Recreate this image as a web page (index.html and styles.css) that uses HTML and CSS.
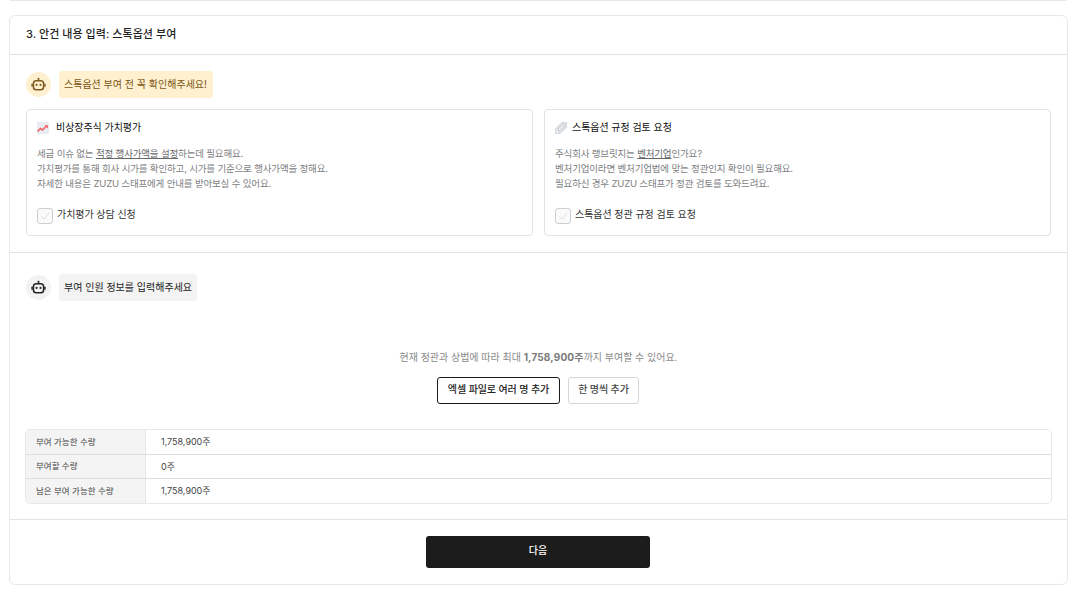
FILE: index.html
```html
<!DOCTYPE html>
<html lang="ko">
<head>
<meta charset="utf-8">
<title>스톡옵션 부여</title>
<link rel="stylesheet" href="styles.css">
</head>
<body>
<div class="top-rule"></div>
<main class="panel">
  <header class="panel-head">3. 안건 내용 입력: 스톡옵션 부여</header>
  <section class="notice">
    <div class="bot-row">
      <span class="avatar avatar-warm">
        <svg class="bot" viewBox="0 0 16 16"><use href="#bot"/></svg>
      </span>
      <span class="bubble bubble-warm">스톡옵션 부여 전 꼭 확인해주세요!</span>
    </div>
    <div class="cards">
      <article class="card">
        <h3 class="card-title">
          <svg class="icon-chart" viewBox="0 0 12 12"><rect width="12" height="12" rx="1" fill="#e8ebef"/><path d="M0.5 9.5 L3.5 6.5 L5.5 8 L9.5 4" fill="none" stroke="#f7626a" stroke-width="1.6"/><path d="M7.5 3.2 H11 V6.5 Z" fill="#f7626a"/></svg>
          비상장주식 가치평가
        </h3>
        <p class="card-text">세금 이슈 없는 <u>적정 행사가액을 설정</u>하는데 필요해요.<br>가치평가를 통해 회사 시가를 확인하고, 시가를 기준으로 행사가액을 정해요.<br>자세한 내용은 ZUZU 스태프에게 안내를 받아보실 수 있어요.</p>
        <label class="check">
          <span class="box"><svg viewBox="0 0 16 16"><path d="M4 8.5 L7 11.5 L12.5 4.5" fill="none" stroke="#d5d8dc" stroke-width="1"/></svg></span>
          <span class="check-text">가치평가 상담 신청</span>
        </label>
      </article>
      <article class="card card-alt">
        <h3 class="card-title">
          <svg class="icon-clip" viewBox="0 0 12 12"><g transform="rotate(45 6 6)" fill="#e9ecef" stroke="#bfc5cc" stroke-width="0.9"><rect x="2.8" y="-1.5" width="6.4" height="15" rx="3.2"/><rect x="4.6" y="0.6" width="2.8" height="9.5" rx="1.4"/></g></svg>
          스톡옵션 규정 검토 요청
        </h3>
        <p class="card-text">주식회사 랭브릿지는 <u>벤처기업</u>인가요?<br>벤처기업이라면 벤처기업법에 맞는 정관인지 확인이 필요해요.<br>필요하신 경우 ZUZU 스태프가 정관 검토를 도와드려요.</p>
        <label class="check">
          <span class="box"><svg viewBox="0 0 16 16"><path d="M4 8.5 L7 11.5 L12.5 4.5" fill="none" stroke="#d5d8dc" stroke-width="1"/></svg></span>
          <span class="check-text">스톡옵션 정관 규정 검토 요청</span>
        </label>
      </article>
    </div>
  </section>
  <section class="people">
    <div class="bot-row">
      <span class="avatar avatar-grey">
        <svg class="bot bot-dark" viewBox="0 0 16 16"><use href="#bot"/></svg>
      </span>
      <span class="bubble bubble-grey">부여 인원 정보를 입력해주세요</span>
    </div>
    <p class="limit">현재 정관과 상법에 따라 최대 <b>1,758,900주</b>까지 부여할 수 있어요.</p>
    <div class="actions">
      <button class="btn btn-strong">엑셀 파일로 여러 명 추가</button>
      <button class="btn btn-soft">한 명씩 추가</button>
    </div>
    <div class="summary">
      <div class="row"><div class="label">부여 가능한 수량</div><div class="value">1,758,900주</div></div>
      <div class="row"><div class="label">부여할 수량</div><div class="value">0주</div></div>
      <div class="row"><div class="label">남은 부여 가능한 수량</div><div class="value">1,758,900주</div></div>
    </div>
  </section>
  <footer class="panel-foot"><button class="next">다음</button></footer>
</main>
<svg class="defs" width="0" height="0">
  <symbol id="bot" viewBox="0 0 16 16">
    <circle cx="8" cy="1.8" r="1.1" fill="currentColor"/>
    <rect x="7.4" y="2" width="1.2" height="2.5" fill="currentColor"/>
    <rect x="2.6" y="4" width="10.8" height="9.6" rx="3" fill="none" stroke="currentColor" stroke-width="1.6"/>
    <rect x="0.4" y="7" width="1.5" height="3.6" rx="0.7" fill="currentColor"/>
    <rect x="14.1" y="7" width="1.5" height="3.6" rx="0.7" fill="currentColor"/>
    <circle cx="5.9" cy="8.4" r="1.1" fill="currentColor"/>
    <circle cx="10.1" cy="8.4" r="1.1" fill="currentColor"/>
  </symbol>
</svg>
</body>
</html>
```
FILE: styles.css
```css
* { box-sizing: border-box; }
html, body { margin: 0; padding: 0; background: #fff; }
body {
  width: 1081px;
  height: 604px;
  overflow: hidden;
  padding: 0 13px 0 9px;
  font-family: Inter, "Noto Sans CJK KR", "Noto Sans", sans-serif;
  color: #1a1a1a;
  font-size: 10px;
  letter-spacing: -0.1px;
}
.top-rule { height: 1px; background: #e8e8e8; margin: 0 1px 14px 1px; }
.panel { width: 1059px; height: 570px; border: 1px solid #e8e8e8; border-radius: 6px; display: flex; flex-direction: column; }
.panel-head { height: 39px; border-bottom: 1px solid #e3e3e3; padding: 0 0 5px 16px; display: flex; align-items: center; font-size: 11px; font-weight: 500; letter-spacing: 0.05px; color: #222; flex: none; }
.notice { height: 198px; padding: 16px 16px 0; border-bottom: 1px solid #e3e3e3; flex: none; }
.bot-row { display: flex; align-items: center; gap: 8px; height: 27px; }
.avatar { width: 25px; height: 25px; border-radius: 50%; display: flex; align-items: center; justify-content: center; flex: none; }
.avatar-warm { background: #fff1d0; color: #7d5a1e; }
.avatar-grey { background: #f2f2f2; color: #222; }
.bot { width: 15px; height: 15px; display: block; }
.bubble { height: 27px; border-radius: 3px; padding: 0 5px 2px; display: flex; align-items: center; letter-spacing: 0; }
.bubble-warm { background: #fff1d0; color: #7a5312; padding-right: 6px; }
.bubble-grey { background: #f3f3f3; color: #222; }
.cards { display: grid; grid-template-columns: 507px 507px; gap: 11px; margin-top: 11px; }
.card { height: 127px; border: 1px solid #e3e3e3; border-radius: 4px; padding: 10px 10px 0; display: flex; flex-direction: column; }
.card-title { margin: 0; height: 15px; font-size: 10px; font-weight: 400; letter-spacing: -0.05px; line-height: 15px; display: flex; align-items: center; gap: 7px; color: #111; }
.icon-chart, .icon-clip { width: 12px; height: 12px; flex: none; }
.card-alt .card-title { gap: 5px; }
.card-text { margin: 11px 0 0; color: #7c7e81; font-size: 9.5px; letter-spacing: -0.17px; line-height: 15px; height: 45px; }
.card-text u { color: #66686b; text-underline-offset: 1px; }
.check { margin-top: 17px; display: flex; align-items: center; gap: 4px; height: 16px; font-size: 10px; letter-spacing: -0.05px; color: #333; }
.check-text { padding-bottom: 5px; }
.box { width: 16px; height: 16px; border: 1px solid #cbced2; border-radius: 3px; background: #fafafa; display: block; flex: none; }
.box svg { display: block; width: 14px; height: 14px; }
.people { flex: 1; padding: 21px 15px 0; border-bottom: 1px solid #e3e3e3; }
.people .bot-row { margin-left: 1px; }
.limit { margin: 50px 0 0; text-align: center; color: #8a8a8a; font-size: 10px; letter-spacing: -0.02px; line-height: 13px; }
.limit b { font-weight: 700; color: #7a7a7a; letter-spacing: 0.18px; }
.actions { display: flex; justify-content: center; gap: 8px; margin: 13px 1px 0 0; }
.btn { height: 27px; border-radius: 3px; background: #fff; font-family: inherit; font-size: 10px; font-weight: 500; letter-spacing: -0.1px; padding: 0 0 4px; cursor: pointer; }
.btn-strong { width: 123px; border: 1px solid #1a1a1a; color: #222; }
.btn-soft { width: 71px; border: 1px solid #d6d6d6; color: #444; }
.summary { margin-top: 25px; border: 1px solid #e8e8e8; border-radius: 5px; overflow: hidden; }
.row { display: flex; height: 24px; border-bottom: 1px solid #dedede; }
.row:first-child { height: 25px; }
.row:last-child { border-bottom: 0; }
.label { width: 120px; background: #f4f4f4; border-right: 1px solid #e8e8e8; padding: 0 0 3px 10px; display: flex; align-items: center; font-size: 8.5px; letter-spacing: 0; color: #444; }
.value { padding: 0 0 1px 15px; display: flex; align-items: center; font-size: 9px; letter-spacing: -0.02px; color: #444; }
.row:first-child .value { padding-bottom: 2px; }
.panel-foot { height: 64px; flex: none; display: flex; justify-content: center; padding: 16px 1px 0 0; }
.next { width: 224px; height: 32px; border: 0; border-radius: 3px; background: #1c1c1c; color: #fff; font-family: inherit; font-size: 10px; font-weight: 500; padding: 0 0 5px; }
.defs { position: absolute; }
```
